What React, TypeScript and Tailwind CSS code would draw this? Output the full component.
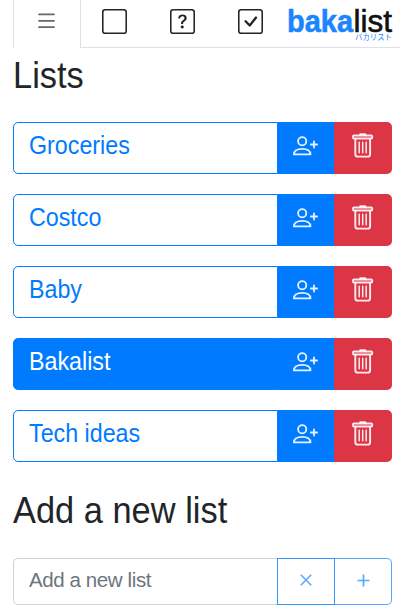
import { BsCheckSquare, BsQuestionSquare, BsSquare } from "react-icons/bs";

const lists = [
  { id: 1, name: "Groceries" },
  { id: 2, name: "Costco" },
  { id: 3, name: "Baby" },
  { id: 4, name: "Bakalist" },
  { id: 5, name: "Tech ideas" },
];

function MenuIcon() {
  return (
    <svg width="17" height="16" viewBox="0 0 17 16" fill="none" stroke="#63686d" strokeWidth="1.8" strokeLinecap="round">
      <path d="M1 1.3H16M1 7.8H16M1 14.2H16" />
    </svg>
  );
}

function PersonPlusIcon() {
  return (
    <svg width="26" height="20" viewBox="0 0 26 20" fill="none" stroke="currentColor" strokeWidth="1.8" strokeLinecap="round" strokeLinejoin="round">
      <circle cx="9.2" cy="5.2" r="4.1" />
      <path d="M0.9 18.4H17.5C17.5 14.8 14.3 12.8 9.2 12.8S0.9 14.8 0.9 18.4Z" />
      <path d="M21 5.4V11.6M17.9 8.5H24.1" />
    </svg>
  );
}

function TrashIcon() {
  return (
    <svg width="22" height="26" viewBox="0 0 22 26" fill="none" stroke="currentColor" strokeWidth="1.9" strokeLinecap="round" strokeLinejoin="round">
      <path d="M8.2 2V1.1H13.2V2" />
      <rect x="1" y="2.5" width="19.2" height="3" rx="1" />
      <path d="M3.3 6V21.2Q3.3 23.6 5.7 23.6H15.7Q18.1 23.6 18.1 21.2V6" />
      <path d="M7.2 9.3V19.8M10.7 9.3V19.8M14.2 9.3V19.8" strokeWidth="1.5" />
    </svg>
  );
}

function Logo() {
  return (
    <svg className="absolute top-0 left-[280px]" width="120" height="47" viewBox="0 0 120 47">
      <g fontFamily="Liberation Sans, Arial, sans-serif" fontSize="32">
        <text x="7" y="32" fontWeight="700" fill="#1a85ff" stroke="#1a85ff" strokeWidth="0.6" textLength="66" lengthAdjust="spacingAndGlyphs">
          baka
        </text>
        <text x="73.5" y="32" fill="#111" stroke="#111" strokeWidth="0.6" textLength="38.5" lengthAdjust="spacingAndGlyphs">
          list
        </text>
      </g>
      <text x="75" y="39.5" fontSize="8" fontFamily="Noto Sans CJK JP, sans-serif" fill="#1a85ff" textLength="37" lengthAdjust="spacingAndGlyphs">
        バカリスト
      </text>
    </svg>
  );
}

export default function App() {
  const active = 4;

  return (
    <div className="relative h-[611px] w-[400px] overflow-hidden bg-white font-['Liberation_Sans',Arial,sans-serif] text-[#212529]">
      <nav className="ml-[13px] flex h-12 text-[#212529]">
        <button className="flex w-[68px] justify-center border-x border-[#dee2e6] pt-[13px] pr-[2px]">
          <MenuIcon />
        </button>
        <div className="flex flex-1 border-b border-[#dee2e6] pt-[9px]">
          <button className="ml-[21px] h-[25px]">
            <BsSquare size={25} />
          </button>
          <button className="ml-[43px] h-[25px]">
            <BsQuestionSquare size={25} />
          </button>
          <button className="ml-[43px] h-[25px]">
            <BsCheckSquare size={25} />
          </button>
        </div>
        <Logo />
      </nav>

      <main className="pr-2 pl-[13px]">
        <h2 className="mt-[7px] h-[67px] origin-left scale-x-[0.93] text-[37px] leading-[42px]">Lists</h2>
        <div className="flex flex-col gap-5">
          {lists.map((list) => (
            <div key={list.id} className="flex h-[52px]">
              <button
                className={`w-[265px] rounded-l-[5px] border border-[#007bff] pb-[4px] pl-[15px] text-left text-[25px] ${
                  list.id === active ? "bg-[#007bff] text-white" : "bg-white text-[#007bff]"
                }`}
              >
                <span className="inline-block origin-left scale-x-[0.93]">{list.name}</span>
              </button>
              <button className="flex w-14 justify-center bg-[#007bff] pt-[14px] text-white/90">
                <PersonPlusIcon />
              </button>
              <button className="flex w-[58px] justify-center rounded-r-[5px] bg-[#dc3545] pt-[11px] pr-[1px] text-white/90">
                <TrashIcon />
              </button>
            </div>
          ))}
        </div>

        <h2 className="mt-[28px] h-[68px] origin-left scale-x-[0.93] text-[37px] leading-[42px]">Add a new list</h2>
        <div className="flex h-[47px]">
          <input
            className="w-[264px] rounded-l-[5px] border border-r-0 border-[#ced4da] pb-[2px] pl-[15px] text-[20.5px] tracking-[-0.4px] outline-none placeholder:text-[#6c757d]"
            placeholder="Add a new list"
          />
          <button className="flex w-[58px] items-center justify-center border border-[#3395ff] pb-[4px] text-[#55a7ff]">
            <svg width="12" height="12" viewBox="0 0 12 12" stroke="currentColor" strokeWidth="1.5">
              <path d="M0.8 0.8L11.2 11.2M11.2 0.8L0.8 11.2" />
            </svg>
          </button>
          <button className="flex w-[57px] items-center justify-center rounded-r-[5px] border border-l-0 border-[#55a7ff] pb-[3px] text-[#55a7ff]">
            <svg width="13" height="13" viewBox="0 0 13 13" stroke="currentColor" strokeWidth="1.7">
              <path d="M6.5 0.5V12.5M0.5 6.5H12.5" />
            </svg>
          </button>
        </div>
      </main>
    </div>
  );
}
